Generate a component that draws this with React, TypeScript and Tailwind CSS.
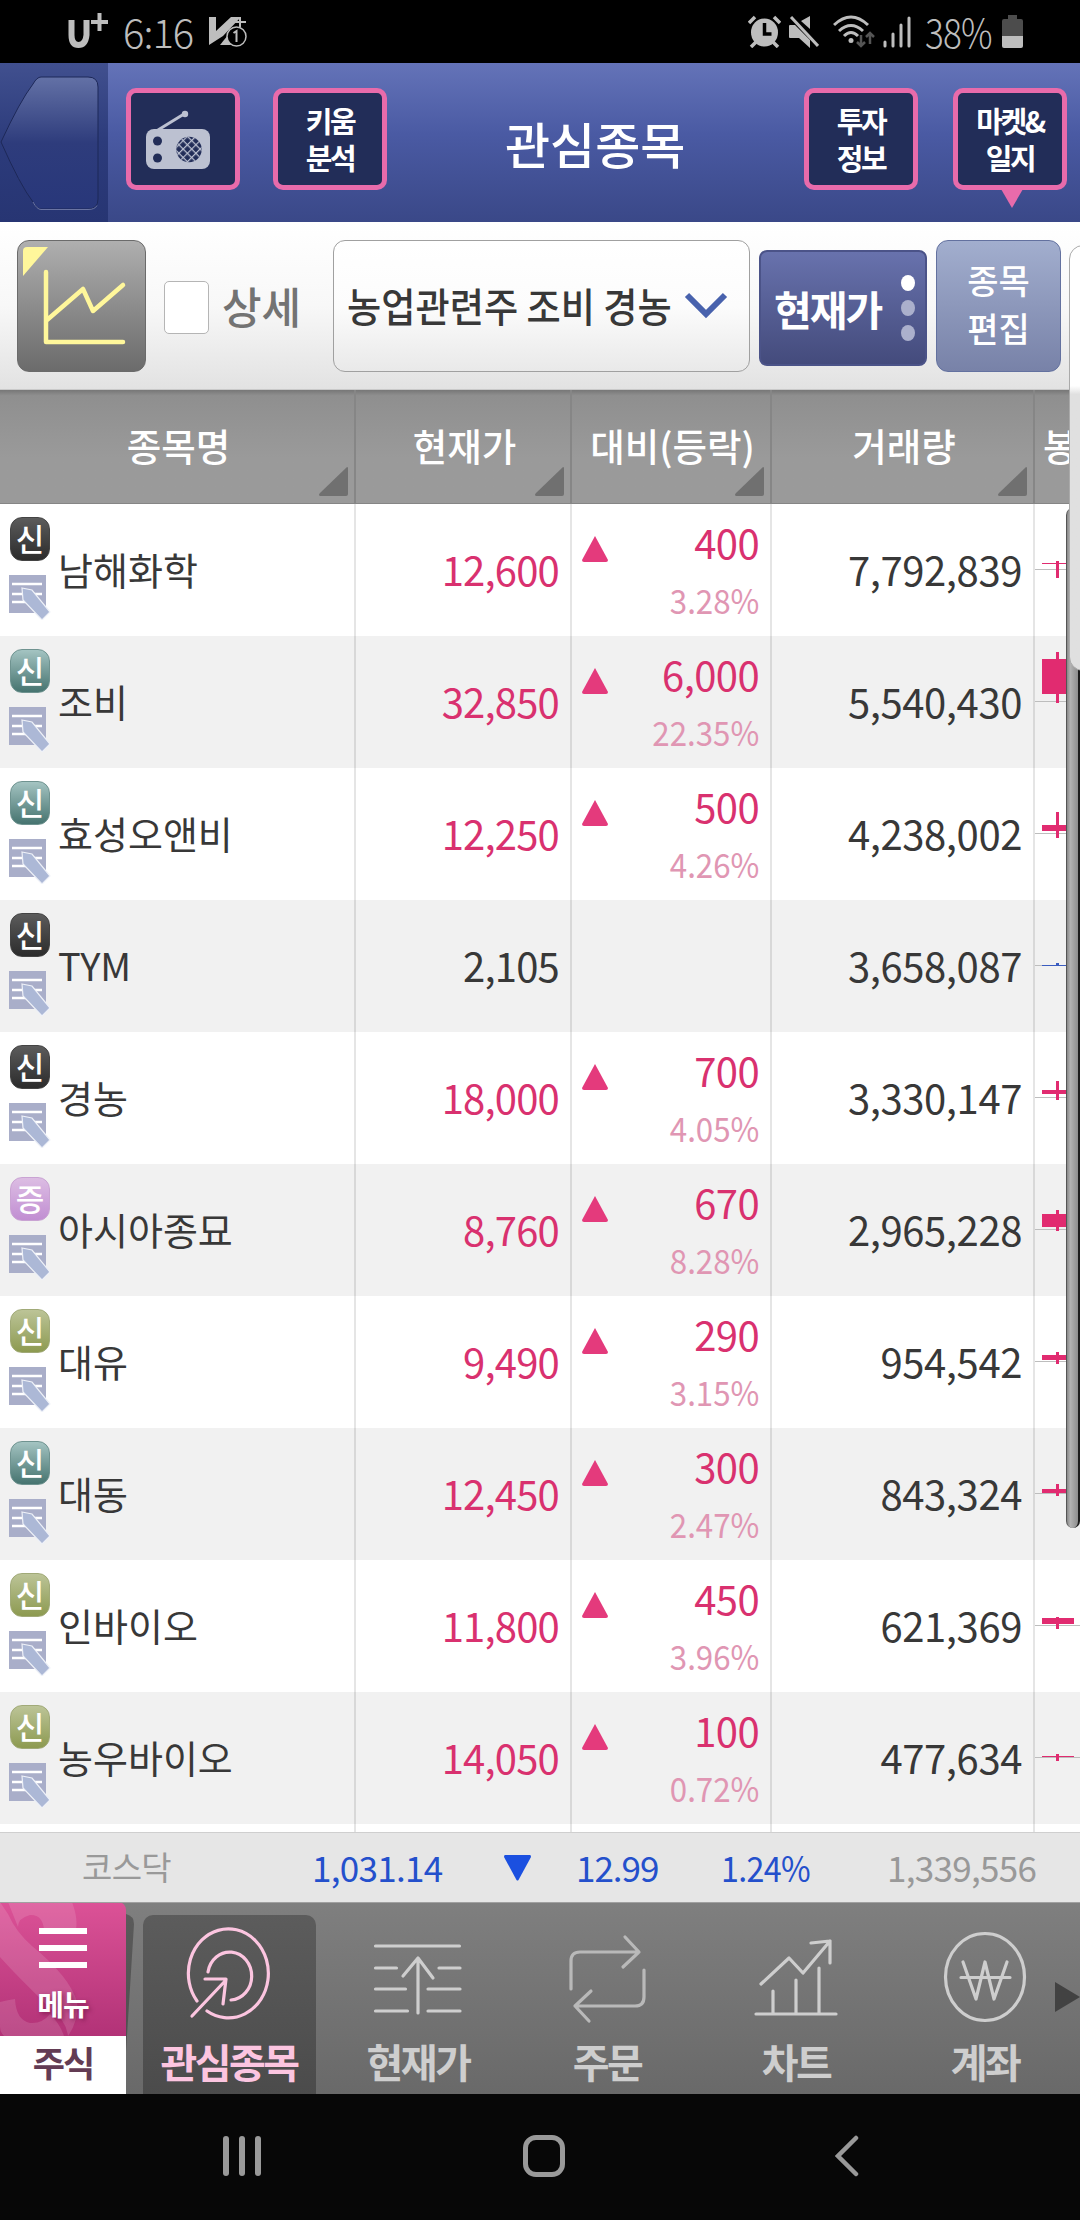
import React from 'react';
import clsx from 'clsx';

type Tone = 'up' | 'flat';
type Badge = 'black' | 'teal' | 'violet' | 'olive';

interface Stock {
  name: string;
  badge: Badge;
  price: string;
  change?: string;
  rate?: string;
  volume: string;
  tone: Tone;
  // [body top, body bottom, wick top, wick bottom] inside the row
  candle: [number, number, number, number];
}

const stocks: Stock[] = [
  { name: '남해화학', badge: 'black', price: '12,600', change: '400', rate: '3.28%', volume: '7,792,839', tone: 'up', candle: [59, 60, 57, 74] },
  { name: '조비', badge: 'teal', price: '32,850', change: '6,000', rate: '22.35%', volume: '5,540,430', tone: 'up', candle: [23, 58, 16, 67] },
  { name: '효성오앤비', badge: 'teal', price: '12,250', change: '500', rate: '4.26%', volume: '4,238,002', tone: 'up', candle: [57, 63, 44, 70] },
  { name: 'TYM', badge: 'black', price: '2,105', volume: '3,658,087', tone: 'flat', candle: [65, 66, 63, 65] },
  { name: '경농', badge: 'black', price: '18,000', change: '700', rate: '4.05%', volume: '3,330,147', tone: 'up', candle: [58, 62, 49, 68] },
  { name: '아시아종묘', badge: 'violet', price: '8,760', change: '670', rate: '8.28%', volume: '2,965,228', tone: 'up', candle: [50, 63, 46, 67] },
  { name: '대유', badge: 'olive', price: '9,490', change: '290', rate: '3.15%', volume: '954,542', tone: 'up', candle: [59, 64, 56, 68] },
  { name: '대동', badge: 'teal', price: '12,450', change: '300', rate: '2.47%', volume: '843,324', tone: 'up', candle: [61, 65, 56, 68] },
  { name: '인바이오', badge: 'olive', price: '11,800', change: '450', rate: '3.96%', volume: '621,369', tone: 'up', candle: [58, 64, 57, 69] },
  { name: '농우바이오', badge: 'olive', price: '14,050', change: '100', rate: '0.72%', volume: '477,634', tone: 'up', candle: [64, 65, 62, 69] },
];

const badgeStyles: Record<Badge, string> = {
  black: 'from-[#5c5c5c] to-[#2c2c2c] border-[#444]',
  teal: 'from-[#a4c4c2] to-[#467470] border-[#6f9390]',
  violet: 'from-[#dcbde3] to-[#c18ed2] border-[#c9a3d3]',
  olive: 'from-[#bcc497] to-[#8d9a50] border-[#a1aa78]',
};

const gridCols = 'grid grid-cols-[356px_216px_200px_263px_45px]';

const StatusBar: React.FC = () => (
  <div className="flex h-[63px] items-center bg-black pl-[68px] text-[#bdbdbd]">
    <svg width="40" height="36" viewBox="0 0 40 36" fill="none" stroke="currentColor" className="-mt-[3px]">
      <path d="M3.5 8v15q0 10 7 10t8-10V8" strokeWidth="6" />
      <path d="M23 10h17M31.5 1v18" strokeWidth="4" />
    </svg>
    <span className="-mt-[2px] ml-[15px] w-[72px] text-[40px] leading-none font-light tracking-[-1px]">6:16</span>
    <svg width="38" height="32" viewBox="0 0 38 32" className="ml-[14px]">
      <path d="M0 1h7v14L22 1h10L14 20 0 29z" fill="currentColor" />
      <path d="M11 29l8-10 3 10z" fill="currentColor" />
      <path d="M25 6h12M31 1v10" stroke="currentColor" strokeWidth="2" />
      <circle cx="27.500" cy="20.500" r="9.500" fill="#000" stroke="currentColor" strokeWidth="1.500" />
      <path d="M24.500 17l3-2v11" fill="none" stroke="currentColor" strokeWidth="2" />
    </svg>
    <div className="mr-[57px] ml-auto flex items-center">
      <svg width="33" height="33" viewBox="0 0 33 33">
        <ellipse cx="16.500" cy="17.500" rx="13.500" ry="14" fill="currentColor" />
        <path d="M1 8l6-6M32 8l-6-6M3 32l5-5M30 32l-5-5" stroke="currentColor" strokeWidth="3.500" />
        <path d="M16.500 8v11h7" fill="none" stroke="#000" strokeWidth="3.500" />
      </svg>
      <svg width="30" height="33" viewBox="0 0 30 33" className="ml-[8px]">
        <path d="M21 1v13l-9-8zM0 11q0-1 1-1h5l15 15v8L10 23H1q-1 0-1-1z" fill="currentColor" />
        <path d="M2 2l27 29" stroke="currentColor" strokeWidth="3" />
      </svg>
      <svg width="42" height="34" viewBox="0 0 42 34" className="ml-[14px]" fill="none" stroke="currentColor" strokeWidth="3">
        <path d="M1 10Q18-6 35 10M6 16q12-11 24 0M11 21q7-7 14 0" />
        <circle cx="18" cy="25.500" r="2.500" fill="currentColor" stroke="none" />
        <path d="M28 20v10M24 27l4 4 4-4M37 29V19M33 22l4-4 4 4" stroke="#555" strokeWidth="2.500" />
      </svg>
      <svg width="28" height="33" viewBox="0 0 28 33" className="ml-[8px]" stroke="currentColor" strokeWidth="3" strokeLinecap="round">
        <path d="M2 27v4M10 19v12M18 10v21M26 3v28" />
      </svg>
      <span className="-mt-[2px] ml-[14px] w-[68px] text-[40px] leading-none font-light tracking-[-1px]"><span className="inline-block origin-left scale-x-[0.88]">38%</span></span>
      <svg width="21" height="33" viewBox="0 0 21 33" className="ml-[9px]">
        <path d="M6 0h9v4h4q2 0 2 2v15H0V6q0-2 2-2h4z" fill="#4c4c4c" />
        <path d="M0 21h21v10q0 2-2 2H2q-2 0-2-2z" fill="currentColor" />
      </svg>
    </div>
  </div>
);

const HeaderButton: React.FC<{ className?: string; children: React.ReactNode }> = ({ className, children }) => (
  <div className={clsx('relative flex h-[102px] w-[114px] flex-col items-center justify-center rounded-[10px] border-[5px] border-[#e86bab] bg-[#222d58] text-[29px] leading-[37px] font-bold tracking-[-2.500px] text-white', className)}>
    {children}
  </div>
);

const RadioIcon: React.FC = () => (
  <svg width="66" height="60" viewBox="0 0 66 60" className="mt-[2px] mr-[11px]">
    <defs>
      <pattern id="mesh" width="6" height="6" patternUnits="userSpaceOnUse" patternTransform="rotate(45)">
        <path d="M0 0h6M0 0v6" stroke="#bcc1d1" strokeWidth="2.400" />
      </pattern>
    </defs>
    <path d="M13 20L39 4" stroke="#bcc1d1" strokeWidth="3" />
    <circle cx="40" cy="4" r="3.200" fill="#bcc1d1" />
    <rect x="1" y="19" width="64" height="40" rx="8" fill="#bcc1d1" />
    <circle cx="12.500" cy="31" r="4.500" fill="#222d58" />
    <circle cx="12.500" cy="48" r="4.500" fill="#222d58" />
    <circle cx="44" cy="39.500" r="12.700" fill="#222d58" />
    <circle cx="44" cy="39.500" r="12.700" fill="url(#mesh)" />
  </svg>
);

const TitleBar: React.FC = () => (
  <header className="flex h-[159px] bg-linear-to-b from-[#6473b8] via-[#4a5aa3] via-45% to-[#3a4888]">
    <div className="h-full w-[108px] bg-linear-to-b from-[#41508f] via-[#2c3b7b] via-50% to-[#273573]">
      <svg width="108" height="159" viewBox="0 0 108 159">
        <defs>
          <linearGradient id="backFill" x1="0" y1="0" x2="0" y2="1">
            <stop offset="0" stopColor="#6371a6" />
            <stop offset="0.500" stopColor="#2e3c7c" />
            <stop offset="1" stopColor="#28377a" />
          </linearGradient>
        </defs>
        <path d="M41 14H88q10 0 10 10V136q0 10-10 10H41q-4 0-8-7Q20 122 1 79 20 38 33 21q4-7 8-7z" fill="url(#backFill)" stroke="#1d2858" />
        <path d="M33 139q4 7.500 8 7.500H88q7 0 9-4" fill="none" stroke="#6a74a2" />
      </svg>
    </div>
    <HeaderButton className="mt-[25px] ml-[18px]">
      <RadioIcon />
    </HeaderButton>
    <HeaderButton className="mt-[25px] ml-[33px]">
      <span>키움</span>
      <span>분석</span>
    </HeaderButton>
    <h1 className="ml-[118px] w-[184px] pt-[50px] text-[49px] leading-[60px] font-medium whitespace-nowrap text-white">관심종목</h1>
    <HeaderButton className="mt-[25px] ml-[115px]">
      <span>투자</span>
      <span>정보</span>
    </HeaderButton>
    <HeaderButton className="mt-[25px] ml-[35px] h-[91px] leading-[33px]">
      <span>마켓&amp;</span>
      <span>일지</span>
      <svg width="22" height="19" viewBox="0 0 22 19" className="absolute -bottom-[23px] left-[43px]">
        <path d="M0 0h22L11 19z" fill="#e86bab" />
      </svg>
    </HeaderButton>
  </header>
);

const Toolbar: React.FC = () => (
  <div className="flex h-[168px] border-b border-[#c9c9c9] bg-linear-to-b from-white via-[#f8f8f8] via-50% to-[#e2e2e2] pt-[18px]">
    <button className="ml-[17px] h-[132px] w-[129px] rounded-[12px] border border-[#6b6b6b] bg-linear-to-b from-[#afafaf] to-[#6b6b6b]">
      <svg width="127" height="130" viewBox="0 0 127 130" fill="none" stroke="#fff79b" strokeWidth="4.500" strokeLinecap="round" strokeLinejoin="round">
        <path d="M5 35V10q0-4 4-4h21z" fill="#fff79b" stroke="none" />
        <path d="M28 31v70h77M29 79l36-31 10 22 30-26" />
      </svg>
    </button>
    <div className="mt-[41px] ml-[18px] h-[53px] w-[45px] rounded-[5px] border border-[#b5b5b5] bg-white" />
    <span className="mt-[38px] ml-[13px] w-[111px] text-[43px] leading-[54px] font-medium text-[#737373]">상세</span>
    <div className="flex h-[132px] w-[417px] items-center rounded-[12px] border border-[#a0a0a0] bg-linear-to-b from-white via-[#fcfcfc] via-50% to-[#e9e9e9]">
      <div className="ml-[13px] w-[337px] whitespace-nowrap">
        <span className="inline-block origin-left scale-x-[0.93] text-[40px] leading-none font-medium text-[#383838]">농업관련주 조비 경농</span>
      </div>
      <svg width="44" height="28" viewBox="0 0 44 28" fill="none" stroke="#4862ad" strokeWidth="6">
        <path d="M3 3l19 19L41 3" />
      </svg>
    </div>
    <button className="mt-[10px] ml-[9px] flex h-[116px] w-[168px] items-center rounded-[8px] border-2 border-[#4b5388] bg-linear-to-b from-[#6872ad] to-[#444b7c] text-white">
      <span className="ml-[13px] w-[127px] text-left text-[41px] leading-none font-bold tracking-[-2px]">현재가</span>
      <div className="flex flex-col gap-[9px]">
        <i className="h-4 w-3.5 rounded-[50%] bg-white" />
        <i className="h-4 w-3.5 rounded-[50%] bg-[#abb0cc]" />
        <i className="h-4 w-3.5 rounded-[50%] bg-[#abb0cc]" />
      </div>
    </button>
    <button className="ml-[9px] h-[132px] w-[125px] rounded-[12px] border border-[#63719f] bg-linear-to-b from-[#a2aece] to-[#7882a8] pb-1 text-[34px] leading-[48px] font-medium text-white">
      종목
      <br />
      편집
    </button>
  </div>
);

const HeadCell: React.FC<{ label: string; sortable?: boolean; className?: string }> = ({ label, sortable = true, className }) => (
  <div className={clsx('relative flex h-[114px] border-[#868686] pt-[28px] pl-[3px] text-[37.500px] leading-[54px] font-medium whitespace-nowrap text-white', sortable ? 'justify-center' : 'pl-[8px]', className)}>
    {label}
    {sortable && (
      <svg width="29" height="29" viewBox="0 0 29 29" className="absolute right-[6px] bottom-[8px]">
        <path d="M28 0q1 0 1 1v26q0 2-2 2H1q-2-1 0-3z" fill="#707070" />
      </svg>
    )}
  </div>
);

const NoteIcon: React.FC = () => (
  <svg width="42" height="46" viewBox="0 0 42 46">
    <path d="M0 1h37v38H0z" fill="#a9aec9" />
    <path d="M3 10h30M3 20h30M3 28h22" stroke="#fff" strokeWidth="2.500" />
    <path d="M13 14l10 2 18 22-8 8-19-20z" fill="#acb8d6" stroke="#eef1f8" strokeWidth="1.200" />
  </svg>
);

const Candle: React.FC<{ stock: Stock }> = ({ stock }) => {
  const [top, bottom, high, low] = stock.candle;
  const color = stock.tone === 'up' ? '#e12b70' : '#3a5cc0';
  return (
    <svg width="45" height="132" viewBox="0 0 45 132" shapeRendering="crispEdges">
      <path d="M0 65.500h45" stroke="#bdbdbd" />
      <rect x="7" y={top} width="32" height={bottom - top} fill={color} />
      <rect x="21" y={high} width="3" height={low - high} fill={color} />
    </svg>
  );
};

const Row: React.FC<{ stock: Stock }> = ({ stock }) => (
  <div className={clsx(gridCols, 'h-[132px] odd:bg-white even:bg-[#f1f1f1]')}>
    <div className="flex border-r-2 border-black/10 pl-[9px]">
      <div className="w-[42px] pt-[13px]">
        <div className={clsx('ml-px flex h-[44px] w-[40px] items-center justify-center rounded-[12px] border bg-linear-to-b pb-1 text-[31px] leading-none font-medium text-white', badgeStyles[stock.badge])}>
          {stock.badge === 'violet' ? '증' : '신'}
        </div>
        <div className="mt-[13px]">
          <NoteIcon />
        </div>
      </div>
      <span className="ml-[7px] pt-[38px] text-[38px] leading-[54px] text-[#383838]">{stock.name}</span>
    </div>
    <div className={clsx('border-r-2 border-black/10 pt-[38px] pr-[11px] text-right text-[40px] leading-[54px] tracking-[-0.800px]', stock.tone === 'up' ? 'text-[#d9316f]' : 'text-[#383838]')}>
      {stock.price}
    </div>
    <div className="flex justify-between border-r-2 border-black/10 pr-[11px] pl-[10px]">
      {stock.change && (
        <>
          <svg width="26" height="26" viewBox="0 0 26 26" className="mt-[32px]">
            <path d="M13 0l13 24q0 2-2 2H2q-2 0-2-2z" fill="#e43a7c" />
          </svg>
          <div className="flex flex-col items-end text-right">
            <span className="mt-[11px] text-[40px] leading-[54px] tracking-[-0.600px] text-[#d9316f]">{stock.change}</span>
            <span className="mt-[6px] origin-right scale-x-[0.92] text-[34px] leading-[50px] text-[#e096b3]">{stock.rate}</span>
          </div>
        </>
      )}
    </div>
    <div className="border-r-2 border-black/10 pt-[38px] pr-[11px] text-right text-[40px] leading-[54px] tracking-[-0.400px] text-[#383838]">{stock.volume}</div>
    <Candle stock={stock} />
  </div>
);

const StockTable: React.FC = () => (
  <div className="relative h-[1442px] overflow-hidden bg-white">
    <div className={clsx(gridCols, 'h-[114px] overflow-hidden border-b border-[#858585] bg-linear-to-b from-[#777] via-[#8f8f8f] via-5% to-[#9a9a9a] to-60%')}>
      <HeadCell label="종목명" className="border-r-2" />
      <HeadCell label="현재가" className="border-r-2" />
      <HeadCell label="대비(등락)" className="border-r-2" />
      <HeadCell label="거래량" className="border-r-2" />
      <HeadCell label="봉" sortable={false} />
    </div>
    <div>
      {stocks.map((stock) => (
        <Row key={stock.name} stock={stock} />
      ))}
    </div>
    <div className={clsx(gridCols, 'h-2')}>
      <i className="border-r-2 border-black/10" />
      <i className="border-r-2 border-black/10" />
      <i className="border-r-2 border-black/10" />
      <i className="border-r-2 border-black/10" />
    </div>
    {/* scroll handle */}
    <div className="absolute top-[118px] right-0 h-[1020px] w-[14px] rounded-[7px] border-r-2 border-l border-r-[#1c1c1c] border-l-[#555] bg-linear-to-r from-[#888] via-[#b2b2b2] via-30% to-[#8d8d8d]" />
  </div>
);

const IndexBar: React.FC = () => (
  <div className="flex h-[70px] items-center border-t border-[#cfcfcf] bg-[#e6e6e6] pb-[3px] text-[35px] leading-none tracking-[-0.700px] whitespace-nowrap text-[#2450cc]">
    <span className="ml-[82px] w-[230px] text-[33px] text-[#999]">코스닥</span>
    <span className="w-[192px]">1,031.14</span>
    <svg width="27" height="26" viewBox="0 0 27 26" className="mt-[4px]">
      <path d="M1 0h25q1 0 1 2L14.500 25q-1 1-2 0L0 2q0-2 1-2z" fill="#1b50e0" />
    </svg>
    <span className="ml-[45px] w-[145px] tracking-[-1px]">12.99</span>
    <span className="w-[166px]"><span className="inline-block origin-left scale-x-[0.92]">1.24%</span></span>
    <span className="text-[#999]">1,339,556</span>
  </div>
);

const TabItem: React.FC<{ label: string; active?: boolean; children: React.ReactNode }> = ({ label, active, children }) => (
  <div className="w-[189px] px-2 pt-[12px]">
    <div className={clsx('flex h-[180px] flex-col items-center rounded-t-[10px]', active ? 'bg-linear-to-b from-[#5c5c5c] to-[#4b4b4b] text-[#fcc5e0]' : 'text-[#cecece]')}>
      <svg width="100" height="100" viewBox="0 0 100 100" className="mt-[12px]" fill="none" stroke="currentColor" strokeWidth="3.200" strokeLinecap="round" strokeLinejoin="round">
        {children}
      </svg>
      <span className="mt-[7px] text-[40px] leading-[54px] font-bold tracking-[-2.500px] whitespace-nowrap">{label}</span>
    </div>
  </div>
);

const TabBar: React.FC = () => (
  <nav className="flex h-[192px] overflow-hidden border-t border-[#a0a0a0] bg-linear-to-b from-[#7f7f7f] to-[#696969]">
    <div className="relative z-10 -mt-px w-[126px]">
      <div className="relative flex h-[134px] flex-col items-center overflow-hidden rounded-tr-[8px] bg-linear-to-b from-[#dc5297] to-[#b23277] pt-[26px]">
        <svg width="126" height="134" viewBox="0 0 126 134" className="absolute inset-0" fill="#fff" fillOpacity="0.130">
          <path d="M0 0l8 12q8 18 24 32 38 31 45 56 2 18-9 34-2-16-18-28Q15 72 0 55z" />
          <path d="M8 0h64q6 16 4 27H44Q42 12 30 13q-12 3-12 12z" />
          <path d="M0 100q8-2 15-3 1 21 15 24 12 1 20-9 10 10 14 22H4q-4-4-4-9z" />
        </svg>
        <div className="relative flex flex-col gap-[11px]">
          <i className="h-[6px] w-[48px] bg-white" />
          <i className="h-[6px] w-[48px] bg-white" />
          <i className="h-[6px] w-[48px] bg-white" />
        </div>
        <span className="relative mt-[14px] text-[29px] leading-[42px] font-bold tracking-[-1px] text-white [text-shadow:2px_2px_4px_rgba(90,10,50,0.5)]">메뉴</span>
      </div>
      <div className="h-[58px] bg-white text-center text-[35px] leading-[52px] font-bold tracking-[-2px] text-[#633c54]">주식</div>
      <svg width="9" height="140" viewBox="0 0 9 140" className="absolute top-[12px] left-full">
        <path d="M0 0q8 2 8 10L0 138z" fill="#000" opacity="0.280" />
      </svg>
    </div>
    <div className="ml-[8.500px] flex">
      <TabItem label="관심종목" active>
        <path d="M18 74A40 44.500 0 1 1 28 84" />
        <path d="M29 45A22 24 0 1 1 52 73" />
        <path d="M13 89L47 53M26 52h21l-3 25" />
      </TabItem>
      <TabItem label="현재가">
        <path d="M7.500 19h84M7.500 41h21M71 41h21M7.500 62h30M60 62h32M7.500 84h32M60 84h32" />
        <path d="M50 86V31M35 49l15-18 15 20" />
      </TabItem>
      <TabItem label="주문">
        <path d="M14 62V34q0-9 9-9h59M68 10l14 15-16 15M87 43v27q0 9-9 9H18M34 64L18 79l14 15" stroke="#b9b9b9" />
      </TabItem>
      <TabItem label="차트">
        <path d="M10 87h80M27 87V64M50 87V53M73 87V41M15 57l28-26 14 15 27-32M65 16l19-2v22" />
      </TabItem>
      <TabItem label="계좌">
        <ellipse cx="50" cy="50" rx="39.500" ry="43.500" />
        <path d="M28 35l13 37 9-37 9 37 13-37M26 50.500h49" />
      </TabItem>
    </div>
    <svg width="26" height="32" viewBox="0 0 26 32" className="relative mt-[78px] -ml-[26px] shrink-0">
      <path d="M1 1l25 15L1 31z" fill="#424242" />
    </svg>
  </nav>
);

const SystemNav: React.FC = () => (
  <div className="flex h-[126px] items-center bg-[#070707] pb-[2px] pl-[223px]">
    <div className="flex w-[300px] gap-[10px]">
      <i className="h-[40px] w-[6px] rounded-full bg-[#999]" />
      <i className="h-[40px] w-[6px] rounded-full bg-[#999]" />
      <i className="h-[40px] w-[6px] rounded-full bg-[#999]" />
    </div>
    <div className="h-[42px] w-[42px] rounded-[13px] border-[5px] border-[#999]" />
    <svg width="25" height="42" viewBox="0 0 25 42" className="ml-[270px]" fill="none" stroke="#999" strokeWidth="4.500" strokeLinecap="round">
      <path d="M21 3L3 21l18 18" />
    </svg>
  </div>
);

const App: React.FC = () => {
  return (
    <div className="relative h-[2220px] w-[1080px] overflow-hidden bg-black font-['Noto_Sans_CJK_KR',sans-serif]">
      <StatusBar />
      <TitleBar />
      <Toolbar />
      <StockTable />
      <IndexBar />
      <TabBar />
      <SystemNav />
      {/* edge of the slide-out panel */}
      <div className="absolute top-[245px] -right-[10px] h-[426px] w-[21px] rounded-l-[14px] border border-[#aaa] bg-linear-to-b from-white from-33% to-[#e0e0e0] to-35%" />
    </div>
  );
};

export default App;
